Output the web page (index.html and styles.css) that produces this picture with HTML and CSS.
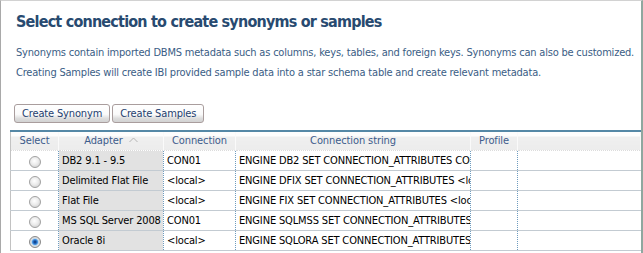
FILE: index.html
```html
<!DOCTYPE html>
<html lang="en">
<head>
    <meta charset="UTF-8">
    <title>Create Synonym</title>
    <link rel="stylesheet" href="styles.css">
</head>
<body>
<div class="panel">
    <h1 class="title">Select connection to create synonyms or samples</h1>
    <p class="note">Synonyms contain imported DBMS metadata such as columns, keys, tables, and foreign keys. Synonyms can also be customized.</p>
    <p class="note">Creating Samples will create IBI provided sample data into a star schema table and create relevant metadata.</p>
    <div class="toolbar">
        <button class="btn">Create Synonym</button>
        <button class="btn">Create Samples</button>
    </div>
    <table class="grid">
        <colgroup>
            <col class="c-select">
            <col class="c-adapter">
            <col class="c-conn">
            <col class="c-string">
            <col class="c-profile">
            <col>
        </colgroup>
        <thead>
            <tr>
                <th>Select</th>
                <th>Adapter <svg class="sort" width="9" height="6" viewBox="0 0 9 6"><polyline points="0.5,5 4.5,1 8.5,5" fill="none" stroke="#b4b4b4" stroke-width="1"/></svg></th>
                <th>Connection</th>
                <th>Connection string</th>
                <th>Profile</th>
                <th></th>
            </tr>
        </thead>
        <tbody>
            <tr>
                <td class="pick"><span class="radio"></span></td>
                <td class="adapter">DB2 9.1 - 9.5</td>
                <td>CON01</td>
                <td>ENGINE DB2 SET CONNECTION_ATTRIBUTES CON01</td>
                <td></td>
                <td></td>
            </tr>
            <tr>
                <td class="pick"><span class="radio"></span></td>
                <td class="adapter">Delimited Flat File</td>
                <td>&lt;local&gt;</td>
                <td>ENGINE DFIX SET CONNECTION_ATTRIBUTES &lt;local&gt;</td>
                <td></td>
                <td></td>
            </tr>
            <tr>
                <td class="pick"><span class="radio"></span></td>
                <td class="adapter">Flat File</td>
                <td>&lt;local&gt;</td>
                <td>ENGINE FIX SET CONNECTION_ATTRIBUTES &lt;local&gt;</td>
                <td></td>
                <td></td>
            </tr>
            <tr>
                <td class="pick"><span class="radio"></span></td>
                <td class="adapter">MS SQL Server 2008</td>
                <td>CON01</td>
                <td>ENGINE SQLMSS SET CONNECTION_ATTRIBUTES CON01</td>
                <td></td>
                <td></td>
            </tr>
            <tr>
                <td class="pick"><span class="radio checked"></span></td>
                <td class="adapter">Oracle 8i</td>
                <td>&lt;local&gt;</td>
                <td>ENGINE SQLORA SET CONNECTION_ATTRIBUTES &lt;local&gt;</td>
                <td></td>
                <td></td>
            </tr>
        </tbody>
    </table>
</div>
</body>
</html>
```

FILE: styles.css
```css
* {
    margin: 0;
    padding: 0;
    box-sizing: border-box;
}

body {
    background: #fff;
    font-family: "DejaVu Sans", "Liberation Sans", sans-serif;
    font-stretch: condensed;
    font-size: 11px;
    letter-spacing: -0.1px;
}

.panel {
    width: 643px;
    height: 253px;
    overflow: hidden;
    border-top: 1px solid #d2d2d2;
    border-left: 1px solid #a9a9a9;
    border-right: 2px solid #8fa79f;
    padding-top: 10px;
}

.title {
    margin-left: 15px;
    font-size: 16px;
    line-height: 22px;
    letter-spacing: -0.8px;
    font-weight: bold;
    color: #284a70;
}

.note {
    margin-left: 15px;
    line-height: 20px;
    letter-spacing: -0.2px;
    white-space: nowrap;
    color: #3a5d85;
}

.title + .note {
    margin-top: 10px;
}

.toolbar {
    display: flex;
    gap: 2px;
    margin: 21px 0 0 13px;
}

.btn {
    height: 19px;
    padding: 0 7px;
    border: 1px solid #a99d9d;
    border-radius: 3px;
    background: linear-gradient(#fff 0%, #fafafa 55%, #dcdcdc 80%, #d2d2d2 100%);
    font-family: inherit;
    font-stretch: condensed;
    font-size: 11px;
    letter-spacing: -0.15px;
    color: #1f3f6f;
}

.grid {
    margin: 7px 0 0 9px;
    width: 631px;
    table-layout: fixed;
    border-collapse: collapse;
    border-top: 2px solid #5588a6;
    border-left: 1px solid #c2c2c2;
}

.c-select { width: 48px; }
.c-adapter { width: 105px; }
.c-conn { width: 72px; }
.c-string { width: 235px; }
.c-profile { width: 47px; }

.grid th {
    height: 19px;
    font-weight: normal;
    color: #3d5c8c;
    background: linear-gradient(#fdfdfd 0%, #fdfdfd 20%, #efefef 30%, #ececec 100%);
    border-right: 1px solid #fafafa;
    border-bottom: 1px dotted #dcdcdc;
    white-space: nowrap;
    overflow: hidden;
}

.sort {
    margin-left: 3px;
    vertical-align: 1px;
}

.grid td {
    height: 20px;
    padding-left: 3px;
    color: #000;
    letter-spacing: -0.15px;
    white-space: nowrap;
    overflow: hidden;
    border-right: 1px dotted #6f9cbf;
    border-bottom: 1px solid #c3cbd2;
}

.grid td:last-child {
    border-right: none;
}

.grid td.pick {
    padding-left: 0;
    text-align: center;
}

.grid td.adapter {
    background: #e2e2e2;
}

.radio {
    display: inline-block;
    width: 12px;
    height: 12px;
    margin-top: 3px;
    border: 1px solid #a2a2a2;
    border-radius: 50%;
    background: radial-gradient(circle at 45% 40%, #fff 0%, #ececec 45%, #c6c6c6 100%);
    vertical-align: top;
}

.radio.checked {
    border-color: #8a8a8a;
    background: radial-gradient(circle at 50% 50%, #0b2d66 0%, #1f5fb4 20%, #4d9be6 38%, #b7d4ee 48%, #e0e0e0 60%, #c4c4c4 100%);
}
```
